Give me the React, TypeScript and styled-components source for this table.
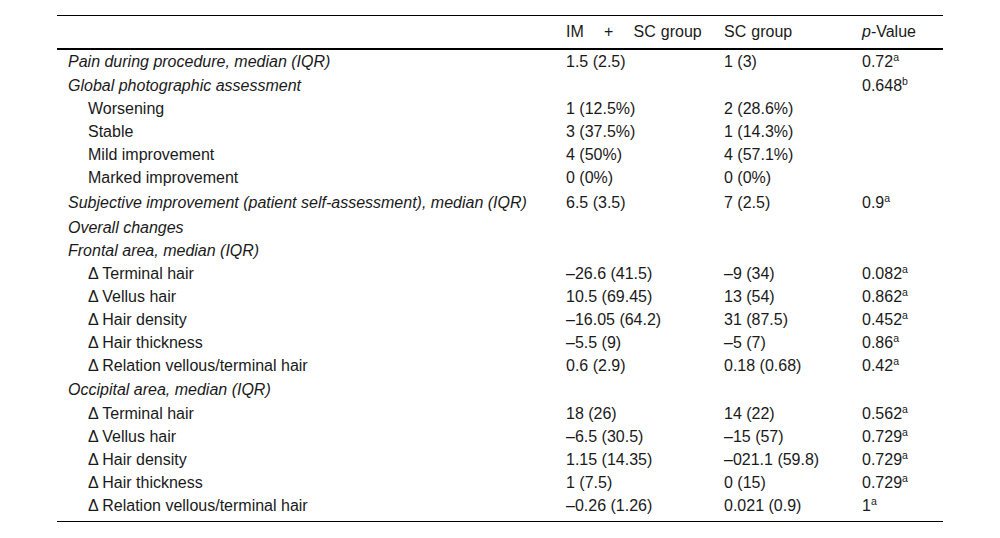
import React from "react";
import styled, { createGlobalStyle } from "styled-components";

const Global = createGlobalStyle`
  html, body { margin: 0; padding: 0; background: #fff; }
  body { font-family: "Liberation Sans", Arial, Helvetica, sans-serif; color: #1a1a1a; }
`;

const Page = styled.div`
  padding: 15px 0 0 57px;
`;

const Table = styled.table`
  width: 886px;
  border-collapse: collapse;
  font-size: 16px;
  table-layout: fixed;
  border-bottom: 1px solid #000;
`;

const HeadRow = styled.tr`
  height: 33px;
  border-top: 1px solid #000;
  border-bottom: 2px solid #000;
`;

const Th = styled.th<{ $w: number }>`
  box-sizing: border-box;
  width: ${(p) => p.$w}px;
  text-align: left;
  font-weight: normal;
  padding: 0 0 0 11px;
  white-space: pre;
  word-spacing: 0.6px;
  vertical-align: middle;
`;

const Row = styled.tr<{ $h: number; $pb?: number }>`
  height: ${(p) => p.$h}px;
  & > td {
    padding-bottom: ${(p) => p.$pb ?? 0}px;
  }
`;

const Td = styled.td`
  padding: 0 0 0 11px;
  vertical-align: middle;
  white-space: nowrap;
`;

const Label = styled(Td)<{ $italic?: boolean; $indent?: boolean }>`
  font-style: ${(p) => (p.$italic ? "italic" : "normal")};
  padding-left: ${(p) => (p.$indent ? 31 : 11)}px;
`;

const Sup = styled.sup`
  font-size: 10.5px;
  vertical-align: 6px;
  line-height: 0;
`;

type R = {
  label: string;
  italic?: boolean;
  indent?: boolean;
  a?: string;
  b?: string;
  p?: string;
  s?: string;
  h: number;
  pb?: number;
};

const rows: R[] = [
  { label: "Pain during procedure, median (IQR)", italic: true, a: "1.5 (2.5)", b: "1 (3)", p: "0.72", s: "a", h: 25 },
  { label: "Global photographic assessment", italic: true, p: "0.648", s: "b", h: 24 },
  { label: "Worsening", indent: true, a: "1 (12.5%)", b: "2 (28.6%)", h: 23 },
  { label: "Stable", indent: true, a: "3 (37.5%)", b: "1 (14.3%)", h: 23 },
  { label: "Mild improvement", indent: true, a: "4 (50%)", b: "4 (57.1%)", h: 23 },
  { label: "Marked improvement", indent: true, a: "0 (0%)", b: "0 (0%)", h: 23 },
  { label: "Subjective improvement (patient self-assessment), median (IQR)", italic: true, a: "6.5 (3.5)", b: "7 (2.5)", p: "0.9", s: "a", h: 27 },
  { label: "Overall changes", italic: true, h: 23 },
  { label: "Frontal area, median (IQR)", italic: true, h: 23 },
  { label: "\u0394 Terminal hair", indent: true, a: "\u201326.6 (41.5)", b: "\u20139 (34)", p: "0.082", s: "a", h: 23 },
  { label: "\u0394 Vellus hair", indent: true, a: "10.5 (69.45)", b: "13 (54)", p: "0.862", s: "a", h: 23 },
  { label: "\u0394 Hair density", indent: true, a: "\u201316.05 (64.2)", b: "31 (87.5)", p: "0.452", s: "a", h: 23 },
  { label: "\u0394 Hair thickness", indent: true, a: "\u20135.5 (9)", b: "\u20135 (7)", p: "0.86", s: "a", h: 23 },
  { label: "\u0394 Relation vellous/terminal hair", indent: true, a: "0.6 (2.9)", b: "0.18 (0.68)", p: "0.42", s: "a", h: 23 },
  { label: "Occipital area, median (IQR)", italic: true, h: 24 },
  { label: "\u0394 Terminal hair", indent: true, a: "18 (26)", b: "14 (22)", p: "0.562", s: "a", h: 24 },
  { label: "\u0394 Vellus hair", indent: true, a: "\u20136.5 (30.5)", b: "\u201315 (57)", p: "0.729", s: "a", h: 23 },
  { label: "\u0394 Hair density", indent: true, a: "1.15 (14.35)", b: "\u2013021.1 (59.8)", p: "0.729", s: "a", h: 23 },
  { label: "\u0394 Hair thickness", indent: true, a: "1 (7.5)", b: "0 (15)", p: "0.729", s: "a", h: 23 },
  { label: "\u0394 Relation vellous/terminal hair", indent: true, a: "\u20130.26 (1.26)", b: "0.021 (0.9)", p: "1", s: "a", h: 27, pb: 4 },
];

export default function App() {
  return (
    <>
      <Global />
      <Page>
        <Table>
          <thead>
            <HeadRow>
              <Th $w={498}> </Th>
              <Th $w={158}>{"IM    +    SC group"}</Th>
              <Th $w={138}>SC group</Th>
              <Th $w={92}>
                <i>p</i>-Value
              </Th>
            </HeadRow>
          </thead>
          <tbody>
            {rows.map((r, i) => (
              <Row key={i} $h={r.h} $pb={r.pb}>
                <Label $italic={r.italic} $indent={r.indent}>
                  {r.label}
                </Label>
                <Td>{r.a}</Td>
                <Td>{r.b}</Td>
                <Td>
                  {r.p}
                  {r.s && <Sup>{r.s}</Sup>}
                </Td>
              </Row>
            ))}
          </tbody>
        </Table>
      </Page>
    </>
  );
}
